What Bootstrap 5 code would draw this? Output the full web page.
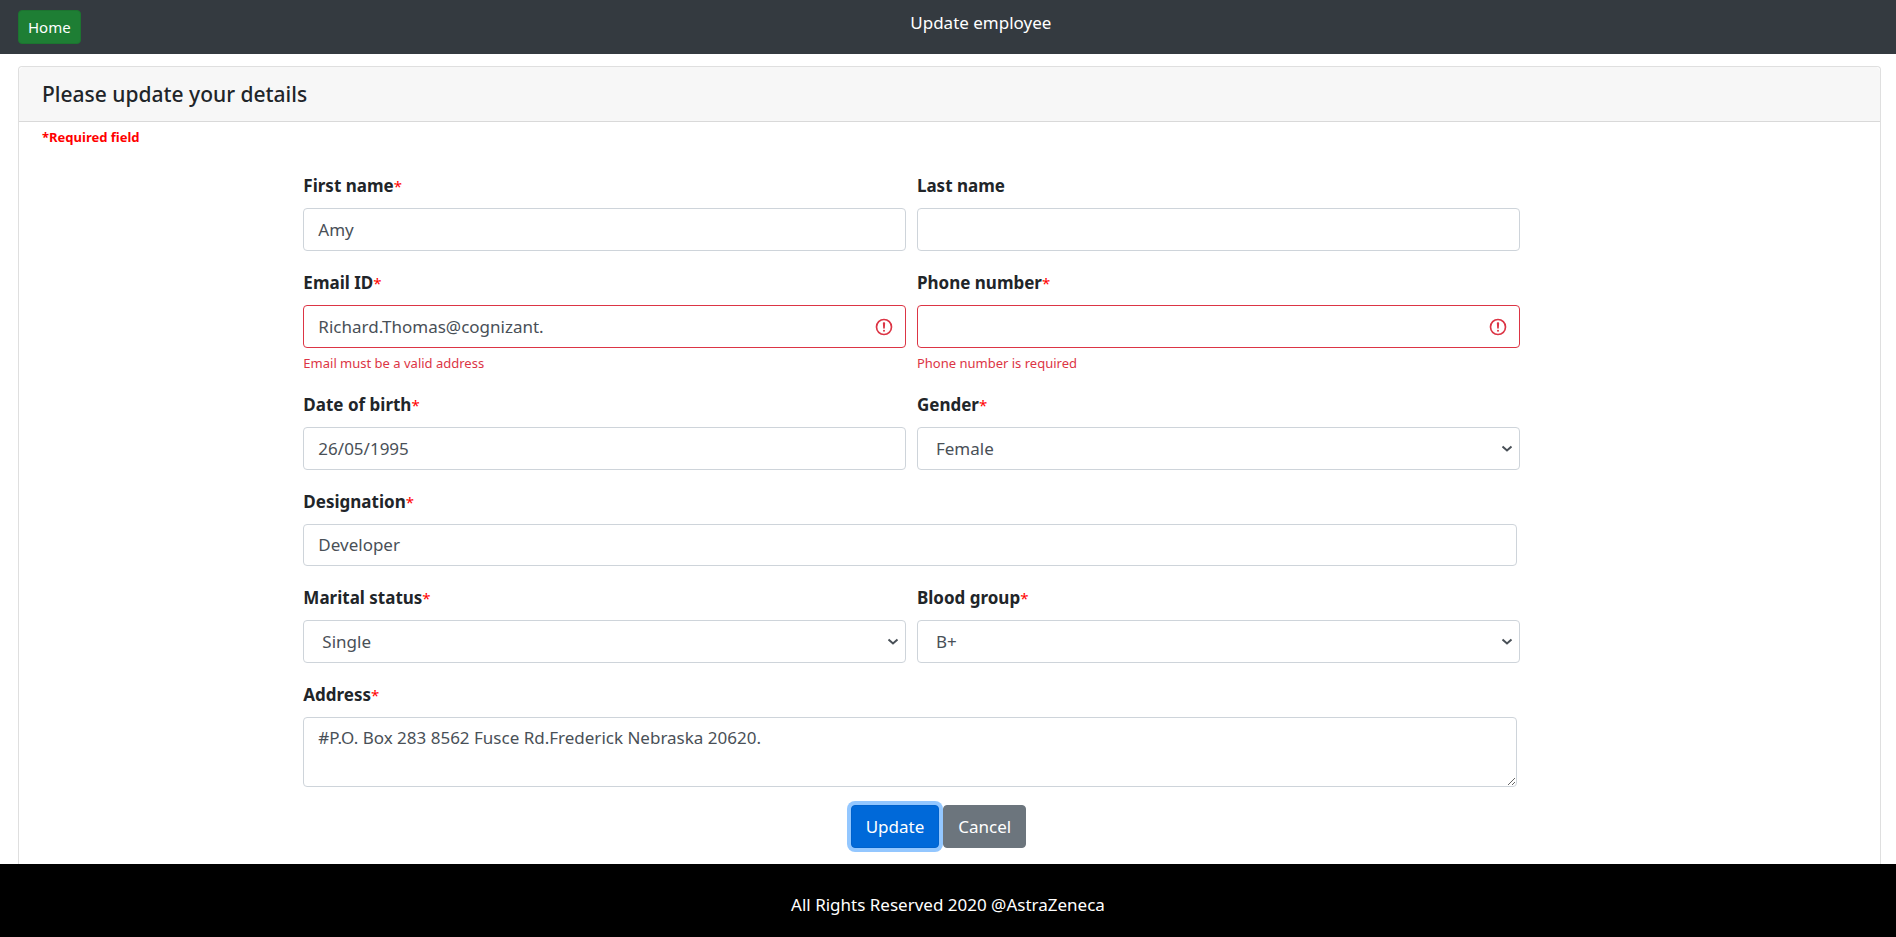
<!DOCTYPE html>
<html lang="en">
<head>
<meta charset="utf-8">
<meta name="viewport" content="width=device-width, initial-scale=1">
<title>Update employee</title>
<link href="https://cdn.jsdelivr.net/npm/bootstrap@5.3.0/dist/css/bootstrap.min.css" rel="stylesheet">
<style>
  body { font-family: "Noto Sans", "Open Sans", sans-serif; font-size: 17px; line-height: 26px; color: #212529; background: #fff; }

  .topbar { background: #343a40; color: #fff; padding: 10px 15px 10px 18px; }
  .btn-home { --bs-btn-color: #fff; --bs-btn-bg: #1e7e34; --bs-btn-border-color: #1c7430; --bs-btn-hover-color: #fff; --bs-btn-hover-bg: #19692c;
    font-size: 15px; line-height: 24px; padding: 4px 9px; border-radius: 4px; }

  .details-card { margin: 12px 15px 0 18px; border: 1px solid #dfdfdf; border-bottom: 0; border-radius: 4px 4px 0 0; }
  .details-card .card-header { background: #f7f7f7; border-bottom: 1px solid #d9d9d9; padding: 14px 23px; }
  .details-card h1 { font-size: 21px; line-height: 26px; font-weight: 500; }
  .required-note { color: #f00; font-size: 13px; line-height: 20px; font-weight: 700; padding: 5px 23px 0; }

  .employee-form { width: 65.35%; margin: 26px 0 16px 15.28%; }
  .field-row { display: grid; grid-template-columns: 1fr 1fr; column-gap: 11px; margin-bottom: 19px; }
  .field-wide { margin: 0 3px 19px 0; }
  .employee-form .form-label { display: block; font-weight: 700; margin-bottom: 9px; }
  .employee-form .form-label span { color: #f00; font-size: 15px; line-height: 20px; font-weight: 400; }

  .employee-form .form-control, .employee-form .form-select {
    font-size: 17px; line-height: 27px; padding: 7px 14px; color: #495057; border: 1px solid #ced4da; border-radius: 4px; background-color: #fff; }
  .employee-form .form-select { padding: 7px 40px 7px 18px;
    background-image: url("data:image/svg+xml,%3csvg xmlns='http://www.w3.org/2000/svg' viewBox='0 0 12 8'%3e%3cpath fill='none' stroke='%23495057' stroke-width='2' d='M1.500 1.500 6 5.500l4.500-4'/%3e%3c/svg%3e");
    background-size: 12px 8px; background-position: right 6px center; }
  .employee-form .form-control.is-invalid { border-color: #dc3545; padding-right: 44px;
    background-size: 20px 20px; background-position: right 11px center; }
  .employee-form .invalid-feedback { font-size: 13px; line-height: 20px; margin-top: 5px; color: #dc3545; }
  .employee-form .field-wide .form-control { line-height: 26px; }
  .employee-form textarea.form-control { height: 70px; min-height: 70px; }

  .actions { margin: 18px 0 0 54px; gap: 4px; }
  .actions .btn { font-size: 17px; line-height: 27px; padding: 7px 14px; border-radius: 4px; }
  .btn-update { --bs-btn-color: #fff; --bs-btn-bg: #0069d9; --bs-btn-border-color: #0062cc; --bs-btn-hover-color: #fff; --bs-btn-hover-bg: #0062cc;
    box-shadow: 0 0 0 4px #93c7ff; }
  .btn-cancel { --bs-btn-color: #fff; --bs-btn-bg: #6c757d; --bs-btn-border-color: #6c757d; --bs-btn-hover-color: #fff; --bs-btn-hover-bg: #5a6268; }

  .site-footer { background: #000; color: #fff; padding: 28px 0 19px; }
</style>
</head>
<body class="d-flex flex-column min-vh-100">

<header class="topbar d-flex align-items-start">
  <button type="button" class="btn btn-home">Home</button>
  <div class="flex-grow-1 text-center">Update employee</div>
</header>

<main class="card details-card flex-grow-1">
  <div class="card-header"><h1 class="mb-0">Please update your details</h1></div>
  <p class="required-note mb-0">*Required field</p>

  <form class="employee-form" novalidate>
    <div class="field-row">
      <div>
        <label class="form-label" for="firstName">First name<span>*</span></label>
        <input type="text" class="form-control" id="firstName" value="Amy">
      </div>
      <div>
        <label class="form-label" for="lastName">Last name</label>
        <input type="text" class="form-control" id="lastName">
      </div>
    </div>

    <div class="field-row">
      <div>
        <label class="form-label" for="email">Email ID<span>*</span></label>
        <input type="email" class="form-control is-invalid" id="email" value="Richard.Thomas@cognizant." aria-describedby="emailError">
        <div class="invalid-feedback" id="emailError">Email must be a valid address</div>
      </div>
      <div>
        <label class="form-label" for="phone">Phone number<span>*</span></label>
        <input type="tel" class="form-control is-invalid" id="phone" aria-describedby="phoneError">
        <div class="invalid-feedback" id="phoneError">Phone number is required</div>
      </div>
    </div>

    <div class="field-row">
      <div>
        <label class="form-label" for="dob">Date of birth<span>*</span></label>
        <input type="text" class="form-control" id="dob" value="26/05/1995">
      </div>
      <div>
        <label class="form-label" for="gender">Gender<span>*</span></label>
        <select class="form-select" id="gender">
          <option selected>Female</option>
          <option>Male</option>
        </select>
      </div>
    </div>

    <div class="field-wide">
      <label class="form-label" for="designation">Designation<span>*</span></label>
      <input type="text" class="form-control" id="designation" value="Developer">
    </div>

    <div class="field-row">
      <div>
        <label class="form-label" for="marital">Marital status<span>*</span></label>
        <select class="form-select" id="marital">
          <option selected>Single</option>
          <option>Married</option>
        </select>
      </div>
      <div>
        <label class="form-label" for="blood">Blood group<span>*</span></label>
        <select class="form-select" id="blood">
          <option selected>B+</option>
          <option>O+</option>
        </select>
      </div>
    </div>

    <div class="field-wide mb-0">
      <label class="form-label" for="address">Address<span>*</span></label>
      <textarea class="form-control" id="address" rows="2">#P.O. Box 283 8562 Fusce Rd.Frederick Nebraska 20620.</textarea>
    </div>

    <div class="actions d-flex justify-content-center">
      <button type="submit" class="btn btn-update">Update</button>
      <button type="button" class="btn btn-cancel">Cancel</button>
    </div>
  </form>
</main>

<footer class="site-footer text-center">All Rights Reserved 2020 @AstraZeneca</footer>

<script src="https://cdn.jsdelivr.net/npm/bootstrap@5.3.0/dist/js/bootstrap.bundle.min.js"></script>
</body>
</html>
